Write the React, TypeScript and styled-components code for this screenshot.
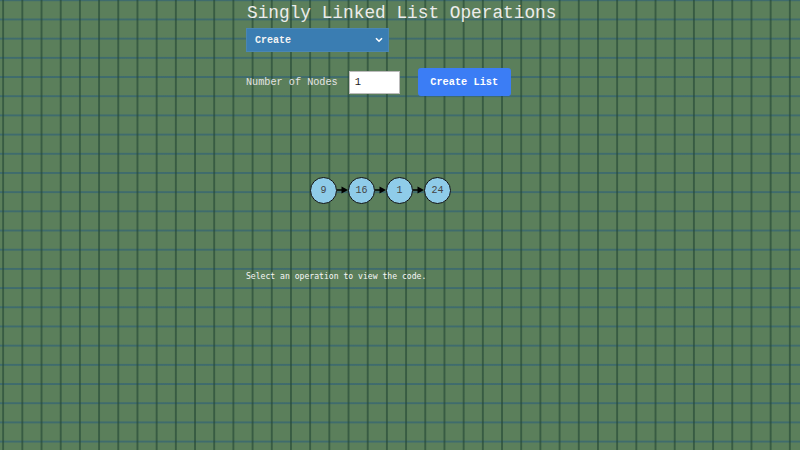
import React from "react";
import styled, { createGlobalStyle } from "styled-components";

const Global = createGlobalStyle`
  html, body { margin: 0; padding: 0; }
  body {
    width: 800px;
    height: 450px;
    overflow: hidden;
    background-color: #5b7f5b;
    background-image:
      linear-gradient(90deg, rgba(34, 70, 52, 0.62) 2px, transparent 2px),
      linear-gradient(rgba(46, 96, 120, 0.62) 1.5px, transparent 1.5px);
    background-size: 19.2px 19.2px, 19.2px 19.2px;
    background-position: 2.2px 0, 0 -0.7px;
    font-family: "Liberation Mono", "Courier New", monospace;
  }
`;

const Page = styled.div`
  width: 308px;
  margin: 0 auto 0 246px;
  display: flex;
  flex-direction: column;
`;

const Title = styled.h1`
  margin: 0;
  padding-top: 2px;
  padding-left: 1px;
  width: 312px;
  font-family: "Liberation Mono", "Courier New", monospace;
  font-weight: normal;
  font-size: 17.8px;
  line-height: 22px;
  color: #ececec;
  white-space: nowrap;
`;

const SelectBox = styled.div`
  margin-top: 4px;
  width: 143px;
  height: 24px;
  box-sizing: border-box;
  background: #3a7db2;
  border: 1px solid #4a86b4;
  display: flex;
  align-items: center;
  justify-content: space-between;
  padding: 0 5px 0 8px;
  color: #f4f4f4;
  font-size: 10px;
  font-weight: bold;
`;

const Row = styled.div`
  margin-top: 16px;
  display: flex;
  align-items: center;
  height: 28px;
`;

const Label = styled.span`
  font-size: 10.2px;
  color: #e4e4e4;
`;

const Input = styled.div`
  margin-left: 11px;
  width: 51px;
  height: 23px;
  box-sizing: border-box;
  background: #fff;
  border: 1px solid #bbb;
  padding-left: 5px;
  display: flex;
  align-items: center;
  font-size: 10.5px;
  color: #222;
`;

const Button = styled.div`
  margin-left: 18px;
  width: 93px;
  height: 28px;
  border-radius: 3px;
  background: #3b7df5;
  color: #fff;
  font-weight: bold;
  font-size: 10.3px;
  display: flex;
  align-items: center;
  justify-content: center;
`;

const Viz = styled.div`
  margin-top: 80px;
  padding-left: 64px;
  display: flex;
  align-items: center;
  height: 28px;
`;

const Node = styled.div`
  width: 25px;
  height: 25px;
  border: 1.5px solid #111;
  border-radius: 50%;
  background: #8fcce9;
  color: #444;
  font-size: 10px;
  display: flex;
  align-items: center;
  justify-content: center;
  flex: none;
`;

const Arrow = styled.svg`
  width: 11px;
  height: 10px;
  flex: none;
  display: block;
`;

const CodeNote = styled.div`
  margin-top: 67px;
  font-family: "DejaVu Sans Mono", monospace;
  font-size: 8.1px;
  color: #f6f6f6;
`;

const values = [9, 16, 1, 24];

export default function App() {
  return (
    <>
      <Global />
      <Page>
        <Title>Singly Linked List Operations</Title>
        <SelectBox>
          <span>Create</span>
          <svg width="8" height="6" viewBox="0 0 8 6">
            <path d="M1 1.2 L4 4.2 L7 1.2" stroke="#fff" strokeWidth="1.6" fill="none" />
          </svg>
        </SelectBox>
        <Row>
          <Label>Number of Nodes</Label>
          <Input>1</Input>
          <Button>Create List</Button>
        </Row>
        <Viz>
          {values.map((v, i) => (
            <React.Fragment key={i}>
              {i > 0 && (
                <Arrow viewBox="0 0 11 10">
                  <line x1="0" y1="5" x2="6" y2="5" stroke="#000" strokeWidth="1.5" />
                  <path d="M4.5 1.5 L11 5 L4.5 8.5 Z" fill="#000" />
                </Arrow>
              )}
              <Node>{v}</Node>
            </React.Fragment>
          ))}
        </Viz>
        <CodeNote>Select an operation to view the code.</CodeNote>
      </Page>
    </>
  );
}
